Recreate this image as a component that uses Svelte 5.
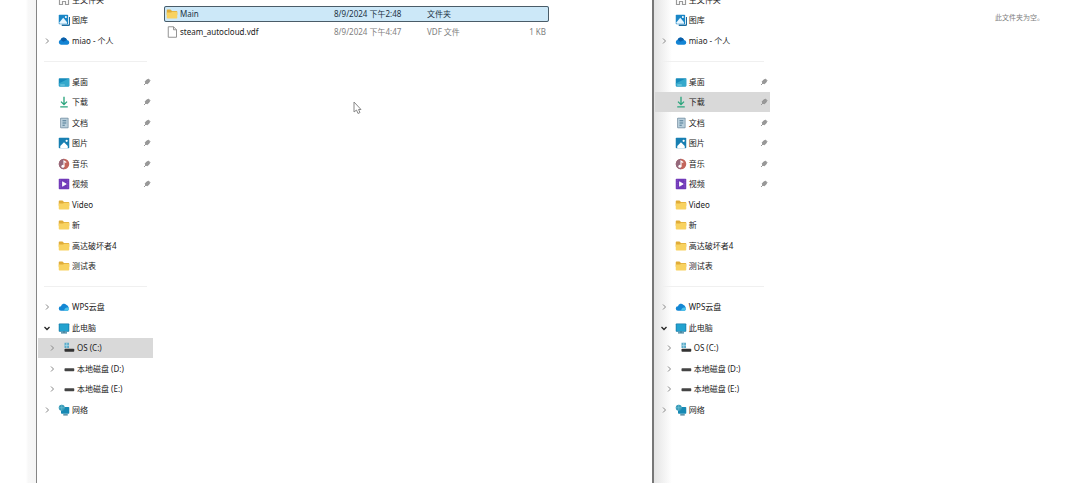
<script lang="ts">
  type NavItem = {
    icon?: string;
    label?: string;
    arrow?: 'right' | 'down';
    pinned?: boolean;
    child?: boolean;
    separator?: boolean;
  };

  type FileRow = {
    icon: string;
    name: string;
    date: string;
    type: string;
    size: string;
  };

  const navItems: NavItem[] = [
    { icon: 'home', label: '主文件夹' },
    { icon: 'gallery', label: '图库' },
    { icon: 'cloud', label: 'miao - 个人', arrow: 'right' },
    { separator: true },
    { icon: 'desktop', label: '桌面', pinned: true },
    { icon: 'download', label: '下载', pinned: true },
    { icon: 'document', label: '文档', pinned: true },
    { icon: 'picture', label: '图片', pinned: true },
    { icon: 'music', label: '音乐', pinned: true },
    { icon: 'video', label: '视频', pinned: true },
    { icon: 'folder', label: 'Video' },
    { icon: 'folder', label: '新' },
    { icon: 'folder', label: '高达破坏者4' },
    { icon: 'folder', label: '测试表' },
    { separator: true },
    { icon: 'wps', label: 'WPS云盘', arrow: 'right' },
    { icon: 'pc', label: '此电脑', arrow: 'down' },
    { icon: 'system', label: 'OS (C:)', arrow: 'right', child: true },
    { icon: 'disk', label: '本地磁盘 (D:)', arrow: 'right', child: true },
    { icon: 'disk', label: '本地磁盘 (E:)', arrow: 'right', child: true },
    { icon: 'network', label: '网络', arrow: 'right' },
  ];

  const files: FileRow[] = [
    { icon: 'folder', name: 'Main', date: '8/9/2024 下午2:48', type: '文件夹', size: '' },
    { icon: 'file', name: 'steam_autocloud.vdf', date: '8/9/2024 下午4:47', type: 'VDF 文件', size: '1 KB' },
  ];

  let leftSelected = $state('OS (C:)');
  let rightSelected = $state('下载');
  let fileSelected = $state('Main');
</script>

{#snippet icon(name: string)}
  <svg class="icon" viewBox="0 0 16 16" aria-hidden="true">
    {#if name === 'home'}
      <path d="M2 7l6-5 6 5v7h-4v-4H6v4H2z" fill="none" stroke="#9a9a9a" stroke-width="1.6" />
    {:else if name === 'gallery'}
      <path d="M5 15h9q1.500 0 1.500-1.500V4" fill="none" stroke="#1c6c9f" stroke-width="1.800" />
      <rect x="1" y="1" width="12.500" height="12.500" rx="1" fill="#1a86c6" />
      <path d="M2 13V11l5-6 5 6v2z" fill="#e8f6ff" />
      <circle cx="10.500" cy="4" r="1.300" fill="#fff" />
    {:else if name === 'cloud'}
      <path d="M4 13a3.500 3.500 0 0 1-.5-6.800A4.500 4.500 0 0 1 12 6.500 3.300 3.300 0 0 1 12.500 13z" fill="#1384d4" />
      <path d="M3.500 6.200A4.500 4.500 0 0 1 12 6.500L7 9z" fill="#0a5ea8" />
    {:else if name === 'desktop'}
      <rect x="1" y="3" width="14" height="11" rx="1" fill="#168abb" />
      <path d="M1 10L15 3v10l-1 1H2z" fill="#35a9cc" />
      <path d="M3 12h6" stroke="#a5e2f2" />
    {:else if name === 'download'}
      <path d="M8 1v10M4 7.500l4 4 4-4M3 14.500h10" fill="none" stroke="#2aa57d" stroke-width="1.800" />
    {:else if name === 'document'}
      <rect x="3" y="1" width="11" height="14" rx="1" fill="#728da0" />
      <rect x="4" y="2" width="9" height="12" fill="#b8cedb" />
      <path d="M6 5h5M6 8h5M6 11h3" stroke="#4d7893" stroke-width="1.300" />
    {:else if name === 'picture'}
      <rect x="1" y="1" width="14" height="14" rx="1" fill="#177fb2" />
      <path d="M3 15v-3l5-5 5 5v3z" fill="#fff" />
      <circle cx="11.500" cy="5" r="1.500" fill="#fff" />
    {:else if name === 'music'}
      <circle cx="8" cy="8" r="7" fill="#c3665c" />
      <path d="M8 1a7 7 0 0 0 0 14z" fill="#95697c" />
      <path d="M8 11V4l3 2" fill="none" stroke="#fff" stroke-width="1.500" />
      <circle cx="6.500" cy="11" r="2" fill="#fff" />
    {:else if name === 'video'}
      <rect x="1" y="1" width="14" height="14" rx="1" fill="#7038b8" />
      <path d="M3 2v12M13 2v12" stroke="#8b58c9" stroke-dasharray="2 1" />
      <path d="M6 5l5 3-5 3z" fill="#fff" stroke="#fff" />
    {:else if name === 'folder'}
      <path d="M1 3q0-1 1-1h4l2 2h6q1 0 1 1v4H1z" fill="#e0ac38" />
      <path d="M1 6h6l1-1h6q1 0 1 1v7q0 1-1 1H2q-1 0-1-1z" fill="#f8d260" />
    {:else if name === 'file'}
      <path d="M3 1h7l4 4v10H3zM10 1v4h4" fill="#fff" stroke="#888" stroke-width="1.200" />
    {:else if name === 'wps'}
      <path d="M4 13a3 3 0 0 1 0-6 4 4 0 0 1 7-2 5 5 0 0 1 2 8z" fill="#1387d4" />
      <path d="M8 13c1-4 3-5 6-4q2 3-1 4z" fill="#4cc3eb" />
    {:else if name === 'pc'}
      <rect x="1" y="2" width="14" height="11" rx="1" fill="#167ca9" />
      <rect x="2" y="3" width="12" height="9" fill="#23a2cf" />
      <path d="M8 12v2M4 14.500h8" stroke="#397d99" stroke-width="1.500" />
    {:else if name === 'system'}
      <path d="M2 1h6v7H2z" fill="#5babc8" />
      <path d="M5 1v7M2 4.500h6" stroke="#b4dbe8" />
      <rect x="2" y="9" width="13" height="4" rx="1" fill="#333" />
    {:else if name === 'disk'}
      <rect x="2" y="7" width="13" height="4" rx="1" fill="#444" />
    {:else if name === 'network'}
      <rect x="4" y="4" width="11" height="9" rx="1" fill="#1689b4" />
      <path d="M7 14.500h6" stroke="#1d6583" stroke-width="1.500" />
      <circle cx="5" cy="5" r="4" fill="#3699b7" />
      <path d="M1 5h8M5 1v8" stroke="#6bbdd2" />
    {/if}
  </svg>
{/snippet}

{#snippet navigation(selected: string, select: (label: string) => void)}
  <nav aria-label="导航窗格">
    <ul>
      {#each navItems as item}
        {#if item.separator}
          <li class="separator"></li>
        {:else}
          <li>
            <button
              class="nav-item"
              class:child={item.child}
              class:selected={item.label === selected}
              onclick={() => select(item.label ?? '')}
            >
              <svg class="arrow" viewBox="0 0 12 12" aria-hidden="true">
                {#if item.arrow === 'right'}
                  <path d="M5 3.500l2.500 2.500L5 8.500" stroke="#888" />
                {:else if item.arrow === 'down'}
                  <path d="M3.500 5L6 7.500 8.500 5" stroke="#222" stroke-width="1.300" />
                {/if}
              </svg>
              {@render icon(item.icon ?? '')}
              <span class="label">{item.label}</span>
              {#if item.pinned}
                <svg class="pin" viewBox="0 0 8 8" aria-hidden="true">
                  <path d="M3 2.500l2.500-1.500L7 2.500 5.500 5 4 6 2 4z" fill="#999" stroke="#888" stroke-width=".7" />
                  <path d="M3 5L1 7" stroke="#999" />
                </svg>
              {/if}
            </button>
          </li>
        {/if}
      {/each}
    </ul>
  </nav>
{/snippet}

<div class="desktop">
  <div class="edge"></div>

  <section class="window source">
    {@render navigation(leftSelected, (label) => (leftSelected = label))}
    <main class="content">
      <table>
        <colgroup>
          <col class="col-name" />
          <col class="col-date" />
          <col class="col-type" />
          <col class="col-size" />
        </colgroup>
        <tbody>
          {#each files as file}
            <tr class:selected={file.name === fileSelected} onclick={() => (fileSelected = file.name)}>
              <td class="name"><span class="name-cell">{@render icon(file.icon)}{file.name}</span></td>
              <td>{file.date}</td>
              <td>{file.type}</td>
              <td class="size">{file.size}</td>
            </tr>
          {/each}
        </tbody>
      </table>
      <svg class="cursor" viewBox="0 0 10 15" aria-hidden="true">
        <path d="M1 1v10l2.500-2L5 12.500l2-1L5.500 8.500H8z" fill="#fff" stroke="#888" />
      </svg>
    </main>
  </section>

  <section class="window target">
    {@render navigation(rightSelected, (label) => (rightSelected = label))}
    <div class="content">
      <p class="empty">此文件夹为空。</p>
    </div>
  </section>
</div>

<style>
  :global(body) {
    background: #fff;
    overflow: hidden;
  }

  .desktop {
    display: flex;
    height: 100vh;
    overflow: hidden;
    font-family: 'Noto Sans', 'Noto Sans CJK SC', sans-serif;
    font-size: 8px;
    line-height: 12px;
    color: #222;
  }

  .edge {
    flex: 0 0 36px;
    background: linear-gradient(90deg, #fff 26px, #f8f8f8 28px, #f5f5f5);
  }

  .window {
    display: flex;
    min-width: 0;
    box-sizing: border-box;
    background: #fff;
  }

  .source {
    flex: 616;
    border-left: 1px solid #858585;
    padding-left: 1px;
  }

  .target {
    flex: 427;
    border-left: 2px solid #777;
    padding-left: 1px;
    background: linear-gradient(90deg, #e4e4e4, #fff 18px);
  }

  nav {
    flex: 0 0 115px;
  }

  /* list is scrolled half a row down */
  ul {
    list-style: none;
    margin: -11px 0 0;
    padding: 0;
  }

  li {
    display: flex;
    height: 20px;
  }

  li:nth-child(odd) {
    height: 21px;
  }

  .separator {
    align-items: center;
    padding: 0 6px;
  }

  .separator::before {
    content: '';
    flex: 1;
    height: 1px;
    background: #f0f0f0;
  }

  .nav-item {
    display: flex;
    flex: 1;
    align-items: center;
    min-width: 0;
    margin: 0;
    padding: 0 2px 0 3px;
    border: 0;
    background: none;
    font: inherit;
    color: inherit;
    text-align: left;
    white-space: nowrap;
  }

  .nav-item.child {
    padding-left: 8px;
  }

  .nav-item.selected {
    background: #d9d9d9;
  }

  .arrow {
    flex: none;
    width: 12px;
    height: 12px;
    margin-right: 5px;
    fill: none;
  }

  .icon {
    flex: none;
    width: 12px;
    height: 12px;
    margin-right: 2px;
  }

  .label {
    flex: 1;
  }

  .pin {
    flex: none;
    width: 8px;
    height: 8px;
  }

  .content {
    position: relative;
    flex: 1;
    min-width: 0;
    padding: 6px 11px;
  }

  table {
    width: 385px;
    table-layout: fixed;
    border-collapse: separate;
    border-spacing: 0 2px;
    margin-top: -2px;
  }

  .col-name {
    width: 170px;
  }

  .col-date {
    width: 93px;
  }

  .col-type {
    width: 72px;
  }

  td {
    height: 16px;
    padding: 0;
    color: #808080;
    white-space: nowrap;
  }

  .name {
    padding-left: 2px;
    color: #222;
  }

  .name-cell {
    display: flex;
    align-items: center;
  }

  .size {
    padding-right: 3px;
    text-align: right;
  }

  tr.selected {
    outline: 1px solid #4a5c68;
    outline-offset: -1px;
    border-radius: 2px;
  }

  tr.selected td {
    background: #cce8f8;
    color: #234;
  }

  .cursor {
    position: absolute;
    top: 101px;
    left: 200px;
    width: 10px;
    height: 15px;
  }

  .empty {
    margin: 6px 25px 0 0;
    font-size: 7px;
    line-height: 12px;
    text-align: right;
    color: #808080;
  }
</style>
